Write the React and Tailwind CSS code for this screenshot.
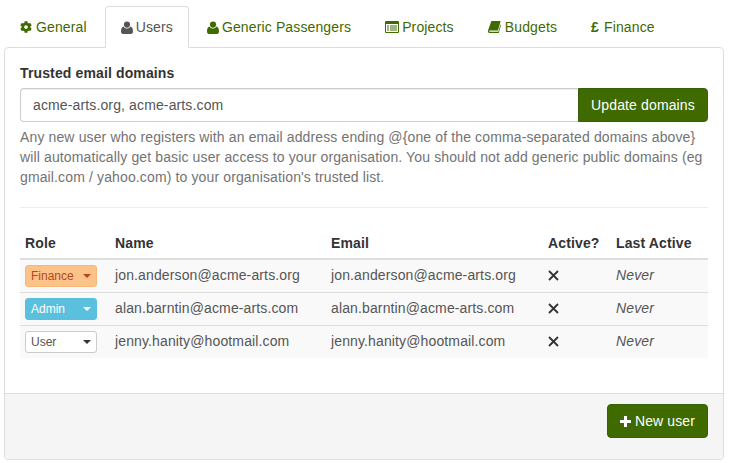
import React from "react";
import { FaCog } from "react-icons/fa";

const UserIcon = ({ className }) => (
  <svg viewBox="0 0 12 13" className={className} fill="currentColor">
    <circle cx="6" cy="3.6" r="3.1" />
    <path d="M2.6 5.6C3.4 7 4.6 7.6 6 7.6s2.6-.6 3.4-2c1.6.3 2.6 1.8 2.6 5 0 1.4-.8 2.4-2 2.4H2c-1.2 0-2-1-2-2.4 0-3.2 1-4.7 2.6-5z" />
  </svg>
);

const ListIcon = ({ className }) => (
  <svg viewBox="0 0 14 12" className={className}>
    <path fill="currentColor" fillRule="evenodd" d="M1 0h12a1 1 0 0 1 1 1v10a1 1 0 0 1-1 1H1a1 1 0 0 1-1-1V1a1 1 0 0 1 1-1zM1 3v8h12V3z" />
    <path fill="currentColor" d="M2 4.5h2v1H2zM5 4.5h7v1H5zM2 6.5h2v1H2zM5 6.5h7v1H5zM2 8.5h2v1H2zM5 8.5h7v1H5z" />
  </svg>
);

const BookIcon = ({ className }) => (
  <svg viewBox="0 0 13 12" className={className}>
    <path fill="currentColor" d="M3.4 0H12.6L10 9.4H1.6C1 9.4 1 10.8 1.8 10.8H10.4L12.4 3.6 13 4 10.8 12H1.6C.4 12-.4 10.6.2 9z" />
  </svg>
);

const PlusIcon = ({ className }) => (
  <svg viewBox="0 0 11 11" className={className}>
    <path fill="currentColor" d="M4 0h3v4h4v3H7v4H4V7H0V4h4z" />
  </svg>
);

const tabs = [
  { label: "General", icon: <FaCog className="w-3 h-3" />, gap: "gap-1" },
  { label: "Users", icon: <UserIcon className="w-3 h-[13px]" />, active: true, gap: "gap-[3px]" },
  { label: "Generic Passengers", icon: <UserIcon className="w-3 h-[13px]" />, gap: "gap-[3px]" },
  { label: "Projects", icon: <ListIcon className="w-[14px] h-3" />, gap: "gap-[3px]" },
  { label: "Budgets", icon: <BookIcon className="w-[13px] h-3" />, gap: "gap-[4px]" },
  { label: "Finance", icon: <span className="font-bold">£</span>, gap: "gap-[5px]" },
];

const rows = [
  { role: "Finance", cls: "bg-[#fbc389] border-[#f5b877] text-[#b3481a]", caret: "border-t-[#b3481a]", name: "jon.anderson@acme-arts.org", h: "h-[33px] border-b border-[#ddd]" },
  { role: "Admin", cls: "bg-[#5bc0de] border-[#5bc0de] text-white", caret: "border-t-white", name: "alan.barntin@acme-arts.com", h: "h-[33px] border-b border-[#ddd]" },
  { role: "User", cls: "bg-white border-[#ccc] text-[#555]", caret: "border-t-[#333]", name: "jenny.hanity@hootmail.com", h: "h-[32px]" },
];

export default function App() {
  return (
    <div className="w-[729px] h-[464px] bg-white px-1 pt-[6px] font-['Liberation_Sans',Arial,sans-serif] text-sm leading-5 tracking-[0.13px] text-[#333]">
      <div className="flex h-[42px] gap-[2px] relative z-10">
        {tabs.map(({ label, icon, active, gap }) => (
          <div
            key={label}
            className={
              active
                ? `flex items-center ${gap} h-[42px] px-[15px] border border-[#ddd] border-b-white bg-white rounded-t text-[#555]`
                : `flex items-center ${gap} h-[42px] px-[15px] border border-transparent text-[#3f6a00]`
            }
          >
            {icon}
            <span>{label}</span>
          </div>
        ))}
      </div>
      <div className="w-[720px] h-[413px] -mt-px border border-[#ddd] rounded flex flex-col">
        <div className="flex-1 px-[15px] pt-[15px]">
          <div className="font-bold h-5 mb-[5px]">Trusted email domains</div>
          <div className="flex h-[34px]">
            <div className="flex-1 border border-[#ccc] rounded-l border-r-0 px-3 flex items-center text-[#555] shadow-[inset_0_1px_1px_rgba(0,0,0,0.075)]">
              acme-arts.org, acme-arts.com
            </div>
            <div className="w-[130px] bg-[#3f6a00] border border-[#38600a] rounded-r text-white flex items-center justify-center">
              Update domains
            </div>
          </div>
          <p className="mt-[5px] text-[#737373] h-[60px]">
            Any new user who registers with an email address ending @&#123;one of the comma-separated domains above&#125;
            <br />
            will automatically get basic user access to your organisation. You should not add generic public domains (eg
            <br />
            gmail.com / yahoo.com) to your organisation's trusted list.
          </p>
          <div className="mt-[20px] border-t border-[#eee]" />
          <div className="mt-[25px]">
            <div className="flex h-[27px] font-bold border-b-2 border-[#ddd] items-start">
              <div className="w-[90px] pl-[5px]">Role</div>
              <div className="w-[216px] pl-[5px]">Name</div>
              <div className="w-[217px] pl-[5px]">Email</div>
              <div className="w-[68px] pl-[5px]">Active?</div>
              <div className="flex-1 pl-[5px]">Last Active</div>
            </div>
            {rows.map((r) => (
              <div key={r.role} className={`flex items-center bg-[#f9f9f9] ${r.h}`}>
                <div className="w-[90px] pl-[5px]">
                  <div className={`w-[72px] h-[22px] border rounded-[3px] flex items-center justify-between pl-[5px] pr-[5px] text-xs tracking-normal ${r.cls}`}>
                    <span>{r.role}</span>
                    <span className={`w-0 h-0 border-x-4 border-x-transparent border-t-4 ${r.caret}`} />
                  </div>
                </div>
                <div className="w-[216px] pl-[5px] mb-[2px] text-[#555]">{r.name}</div>
                <div className="w-[217px] pl-[5px] mb-[2px] text-[#555]">{r.name}</div>
                <div className="w-[68px] pl-[5px] mb-[2px]">
                  <svg viewBox="0 0 11 11" className="w-[11px] h-[11px] text-[#333]">
                    <path d="M1 1l9 9M10 1l-9 9" stroke="currentColor" strokeWidth="1.8" fill="none" />
                  </svg>
                </div>
                <div className="flex-1 pl-[5px] mb-[2px] italic text-[#555]">Never</div>
              </div>
            ))}
          </div>
        </div>
        <div className="h-[66px] border-t border-[#ddd] bg-[#f5f5f5] rounded-b flex items-start justify-end pr-[15px] pt-[10px]">
          <div className="w-[101px] h-[34px] bg-[#3f6a00] border border-[#38600a] rounded text-white flex items-center justify-center gap-1">
            <PlusIcon className="w-[11px] h-[11px]" />
            <span>New user</span>
          </div>
        </div>
      </div>
    </div>
  );
}
